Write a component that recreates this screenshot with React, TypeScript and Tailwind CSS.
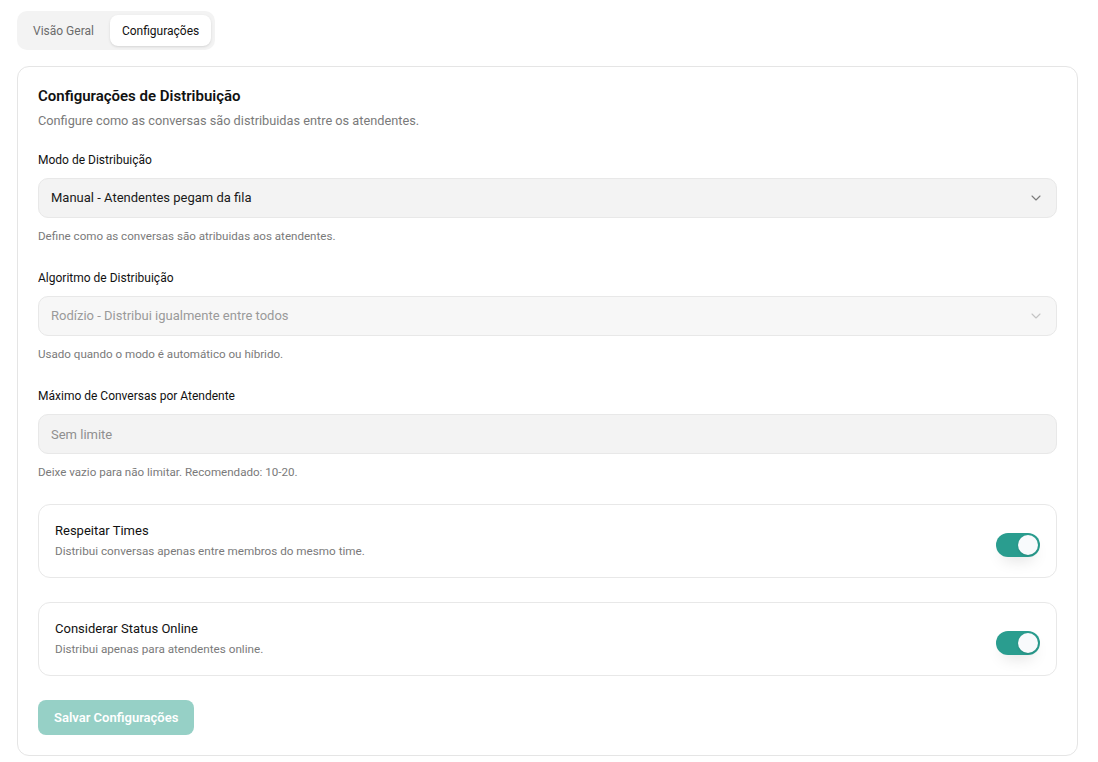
import { useState } from "react";
import { ChevronDown } from "lucide-react";

function Toggle({ on, onChange }: { on: boolean; onChange: () => void }) {
  return (
    <button
      onClick={onChange}
      className={
        "mt-[8px] flex h-6 w-11 shrink-0 items-center rounded-full p-0.5 shadow-[0_8px_16px_-6px_rgba(0,0,0,0.15)] transition-colors " +
        (on ? "bg-[#2a9d8f]" : "bg-[#e5e5e5]")
      }
    >
      <span
        className={
          "h-5 w-5 rounded-full bg-[#f8fafc] shadow-sm transition-transform " +
          (on ? "translate-x-5" : "translate-x-0")
        }
      />
    </button>
  );
}

function SelectBox({ value, disabled }: { value: string; disabled?: boolean }) {
  return (
    <div
      className={
        "flex h-10 items-center justify-between rounded-[10px] border border-[#e8e8e8] px-3 text-[13px] " +
        (disabled ? "bg-[#f7f7f7] text-[#9a9a9a]" : "bg-[#f3f3f3] text-[#1a1a1a]")
      }
    >
      <span>{value}</span>
      <ChevronDown
        className={"h-4 w-4 " + (disabled ? "text-[#c4c4c4]" : "text-[#7a7a7a]")}
        strokeWidth={1.6}
      />
    </div>
  );
}

function Field({ label, hint, children }: { label: string; hint: string; children: React.ReactNode }) {
  return (
    <div className="flex flex-col">
      <label className="text-[12px] leading-5 text-[#111]">{label}</label>
      <div className="mt-2">{children}</div>
      <p className="mt-[10px] text-[11.6px] leading-4 text-[#7a7a7a]">{hint}</p>
    </div>
  );
}

function SwitchRow({
  title,
  desc,
  on,
  onChange,
}: {
  title: string;
  desc: string;
  on: boolean;
  onChange: () => void;
}) {
  return (
    <div className="flex items-center justify-between rounded-xl border border-[#e8e8e8] px-4 py-4">
      <div className="flex flex-col">
        <span className="text-[13px] leading-5 text-[#111]">{title}</span>
        <span className="text-[11.7px] leading-5 text-[#7a7a7a]">{desc}</span>
      </div>
      <Toggle on={on} onChange={onChange} />
    </div>
  );
}

export default function App() {
  const [tab, setTab] = useState("config");
  const [teams, setTeams] = useState(true);
  const [online, setOnline] = useState(true);

  return (
    <div className="min-h-screen bg-white pt-[11px] pr-5 pl-[17px] font-['Roboto',sans-serif] text-[#111]">
      {/* Tabs */}
      <div className="inline-flex h-[39px] items-center gap-1 rounded-[10px] bg-[#f3f3f3] p-1">
        <button
          onClick={() => setTab("overview")}
          className={
            "h-full rounded-lg px-3 text-[12px] " +
            (tab === "overview" ? "bg-white text-[#111] shadow-sm" : "text-[#6b6b6b]")
          }
        >
          Visão Geral
        </button>
        <button
          onClick={() => setTab("config")}
          className={
            "h-full rounded-lg px-3 text-[12px] " +
            (tab === "config" ? "bg-white text-[#111] shadow-sm" : "text-[#6b6b6b]")
          }
        >
          Configurações
        </button>
      </div>

      {/* Distribution settings card */}
      <div className="mt-4 rounded-xl border border-[#e5e5e5] px-5 pt-[19px] pb-5">
        <h2 className="text-[15px] leading-5 font-semibold">Configurações de Distribuição</h2>
        <p className="mt-[5px] text-[12.75px] leading-5 text-[#7a7a7a]">
          Configure como as conversas são distribuidas entre os atendentes.
        </p>

        <div className="mt-[19px] flex flex-col gap-6">
          <Field label="Modo de Distribuição" hint="Define como as conversas são atribuidas aos atendentes.">
            <SelectBox value="Manual - Atendentes pegam da fila" />
          </Field>

          <Field label="Algoritmo de Distribuição" hint="Usado quando o modo é automático ou híbrido.">
            <SelectBox value="Rodízio - Distribui igualmente entre todos" disabled />
          </Field>

          <Field label="Máximo de Conversas por Atendente" hint="Deixe vazio para não limitar. Recomendado: 10-20.">
            <input
              placeholder="Sem limite"
              className="h-10 w-full rounded-[10px] border border-[#e8e8e8] bg-[#f3f3f3] px-3 text-[13px] outline-none placeholder:text-[#8f8f8f]"
            />
          </Field>

          <SwitchRow
            title="Respeitar Times"
            desc="Distribui conversas apenas entre membros do mesmo time."
            on={teams}
            onChange={() => setTeams(!teams)}
          />

          <SwitchRow
            title="Considerar Status Online"
            desc="Distribui apenas para atendentes online."
            on={online}
            onChange={() => setOnline(!online)}
          />

          <div>
            <button className="h-[35px] rounded-lg bg-[#96d0c6] px-4 text-[13px] font-semibold text-white">
              Salvar Configurações
            </button>
          </div>
        </div>
      </div>
    </div>
  );
}
